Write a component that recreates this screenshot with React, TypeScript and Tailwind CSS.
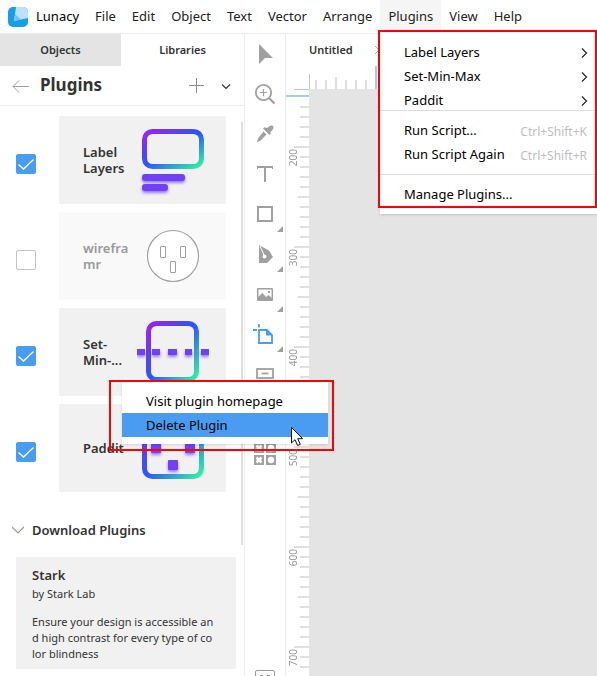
import type { ReactNode } from "react";

const MENU = ["File", "Edit", "Object", "Text", "Vector", "Arrange", "Plugins", "View", "Help"];

function Logo() {
  return (
    <svg width="20" height="20" viewBox="0 0 20 20" aria-hidden="true">
      <defs>
        <clipPath id="logo">
          <rect width="20" height="20" rx="5" />
        </clipPath>
      </defs>
      <g clipPath="url(#logo)">
        <rect width="20" height="20" fill="#179fe5" />
        <path d="M8 0h12v11L6 14Z" fill="#bce2f7" />
        <path d="M7 7 13 12.500 6 14Z" fill="#72c4f0" />
      </g>
    </svg>
  );
}

function BrandGradient({ id }: { id: string }) {
  return (
    <defs>
      <linearGradient id={id} x1="0" y1="0" x2="1" y2="1">
        <stop offset="0" stopColor="#a020f5" />
        <stop offset="0.5" stopColor="#2b55ff" />
        <stop offset="1" stopColor="#30f5a0" />
      </linearGradient>
      <filter id={id + "-shadow"} x="-50%" y="-50%" width="200%" height="250%">
        <feDropShadow dx="0" dy="2" stdDeviation="1.500" floodColor="#6f42f7" floodOpacity="0.7" />
      </filter>
    </defs>
  );
}

function LabelArt() {
  return (
    <svg width="72" height="72" viewBox="0 0 72 72" aria-hidden="true">
      <BrandGradient id="art-label" />
      <rect x="7.500" y="7.500" width="57" height="35" rx="8" fill="none" stroke="url(#art-label)" strokeWidth="5" />
      <g fill="#7040f5" filter="url(#art-label-shadow)">
        <rect x="5" y="50" width="43" height="7" rx="3" />
        <rect x="5" y="60" width="26" height="7" rx="3" />
      </g>
    </svg>
  );
}

function SocketArt() {
  return (
    <svg width="72" height="72" viewBox="0 0 72 72" fill="none" stroke="#a0a0a0" aria-hidden="true">
      <circle cx="36" cy="36" r="25.500" fill="#fff" strokeWidth="1.200" />
      <rect x="23.500" y="26.500" width="5" height="11" rx="0.500" />
      <rect x="43.500" y="26.500" width="5" height="11" rx="0.500" />
      <rect x="33.500" y="41.500" width="5" height="11" rx="0.500" />
    </svg>
  );
}

function MinMaxArt() {
  return (
    <svg width="72" height="72" viewBox="0 0 72 72" aria-hidden="true">
      <BrandGradient id="art-minmax" />
      <rect x="11.500" y="7.500" width="48" height="56" rx="8" fill="none" stroke="url(#art-minmax)" strokeWidth="5" />
      <g fill="#7040f5" filter="url(#art-minmax-shadow)">
        <rect x="0" y="33" width="8" height="6" />
        <rect x="15" y="33" width="8" height="6" />
        <rect x="31" y="33" width="9" height="6" />
        <rect x="48" y="33" width="7" height="6" />
        <rect x="64" y="33" width="8" height="6" />
      </g>
    </svg>
  );
}

function PadditArt() {
  return (
    <svg width="72" height="72" viewBox="0 0 72 72" aria-hidden="true">
      <BrandGradient id="art-paddit" />
      <rect x="7.500" y="7.500" width="57" height="57" rx="8" fill="none" stroke="url(#art-paddit)" strokeWidth="5" />
      <g fill="#7040f5" filter="url(#art-paddit-shadow)">
        <rect x="31" y="15" width="10" height="10" rx="1" />
        <rect x="14" y="31" width="10" height="10" rx="1" />
        <rect x="48" y="31" width="10" height="10" rx="1" />
        <rect x="31" y="48" width="10" height="10" rx="1" />
      </g>
    </svg>
  );
}

type Plugin = { id: string; name: string; on: boolean; art: ReactNode };

const PLUGINS: Plugin[] = [
  { id: "label-layers", name: "Label\nLayers", on: true, art: <LabelArt /> },
  { id: "wireframr", name: "wirefra\nmr", on: false, art: <SocketArt /> },
  { id: "set-min-max", name: "Set-\nMin-...", on: true, art: <MinMaxArt /> },
  { id: "paddit", name: "Paddit", on: true, art: <PadditArt /> },
];

function PluginRow({ plugin }: { plugin: Plugin }) {
  return (
    <li className="flex items-center">
      <span className="grid w-[59px] shrink-0 grid-cols-1 pl-4 pt-2">
        <input
          id={plugin.id}
          type="checkbox"
          defaultChecked={plugin.on}
          className="peer col-start-1 row-start-1 size-5 appearance-none rounded-xs border border-[#c4c4c4] bg-white checked:border-[#4a9cf2] checked:bg-[#4a9cf2]"
        />
        <svg
          className="pointer-events-none invisible col-start-1 row-start-1 peer-checked:visible"
          width="20"
          height="20"
          viewBox="0 0 20 20"
          fill="none"
          stroke="#fff"
          strokeWidth="1.300"
          aria-hidden="true"
        >
          <path d="m2.500 10.500 5 4.500 10-9.500" />
        </svg>
      </span>
      <label
        htmlFor={plugin.id}
        className={`flex h-[88px] w-[167px] items-center rounded-xs pl-6 text-[13px] leading-4 font-semibold whitespace-pre-line ${
          plugin.on ? "bg-[#f1f1f1] text-[#333]" : "bg-[#f9f9f9] text-[#999]"
        }`}
      >
        <span className="w-[54px] shrink-0">{plugin.name}</span>
        {plugin.art}
      </label>
    </li>
  );
}

function Sidebar() {
  return (
    <aside className="flex w-[245px] shrink-0 flex-col border-r border-[#ececec]">
      <div className="flex h-8 shrink-0 text-[11px] font-semibold text-[#333]">
        <button className="w-[121px] bg-[#e4e4e4] pt-px">Objects</button>
        <button className="flex-1 pt-px">Libraries</button>
      </div>
      <div className="flex h-10 shrink-0 items-center border-b border-[#ececec] pr-2 pl-3">
        <button aria-label="Back" className="w-7">
          <svg width="18" height="14" viewBox="0 0 18 14" fill="none" stroke="#a0a0a0" aria-hidden="true">
            <path d="M17 7.500H1M7 1.500l-6 6 6 6" />
          </svg>
        </button>
        <h1 className="flex-1 pb-[2px] text-[17px] leading-6 font-bold text-[#333]">Plugins</h1>
        <button aria-label="Add plugin" className="mr-3">
          <svg width="16" height="16" viewBox="0 0 16 16" stroke="#8a8a8a" aria-hidden="true">
            <path d="M8.500 0v15M1 7.500h15" />
          </svg>
        </button>
        <button aria-label="More" className="px-1">
          <svg width="12" height="12" viewBox="0 0 12 12" fill="none" stroke="#333" strokeWidth="1.200" aria-hidden="true">
            <path d="m2 4.500 4 4 4-4" />
          </svg>
        </button>
      </div>
      <div className="flex min-h-0 flex-1 justify-between">
        <div>
          <ul className="flex flex-col gap-2 pt-[10px]">
            {PLUGINS.map((p) => (
              <PluginRow key={p.id} plugin={p} />
            ))}
          </ul>
          <button className="mt-[27px] flex h-6 items-center pl-3 text-[13px] font-semibold text-[#333]">
            <svg className="mr-2" width="12" height="12" viewBox="0 0 12 12" fill="none" stroke="#999" strokeWidth="1.200" aria-hidden="true">
              <path d="m0 2 6 6 6-6" />
            </svg>
            Download Plugins
          </button>
          <article className="mt-[14px] ml-4 h-28 w-[220px] rounded-xs bg-[#f1f1f1] px-4 py-2 text-[11px] leading-4 text-[#333]">
            <h2 className="text-[13px] leading-5 font-semibold">Stark</h2>
            <p className="leading-[18px]">by Stark Lab</p>
            <p className="mt-[11px] whitespace-pre">{"Ensure your design is accessible an\nd high contrast for every type of co\nlor blindness"}</p>
          </article>
        </div>
        <div className="mt-4 mr-px h-[423px] w-[2px] bg-[#dedede]" />
      </div>
    </aside>
  );
}

const TOOLS: { name: string; more?: boolean; icon: ReactNode }[] = [
  { name: "Select", icon: <path d="M7 4v20l6-6h8Z" fill="#a0a0a0" /> },
  {
    name: "Zoom",
    icon: (
      <g fill="none" stroke="#a0a0a0">
        <circle cx="11.500" cy="12.500" r="7.700" strokeWidth="1.800" />
        <path d="M11.500 9v7M8 12.500h7" strokeWidth="1.200" />
        <path d="m17 18 5.500 5.500" strokeWidth="2.200" />
      </g>
    ),
  },
  {
    name: "Pick colour",
    icon: (
      <g fill="#a0a0a0">
        <path d="M16 7.500c2-2 4-2.500 5-1.500s.5 3-1.500 5l-1.500 1.500 1 1-1.500 1.500-6.500-6.500 1.500-1.500 1 1Z" />
        <path d="m11.500 11.500 3 3-6.500 6.500-3 1 1-3.500Z" />
      </g>
    ),
  },
  { name: "Text", icon: <path d="M5 9V6h16v3h-1V8h-6v14h-2V8H6v1Z" fill="#a0a0a0" /> },
  { name: "Rectangle", more: true, icon: <rect x="6" y="7" width="14" height="14" fill="none" stroke="#a0a0a0" strokeWidth="2" /> },
  {
    name: "Pen",
    more: true,
    icon: (
      <g>
        <path d="m7 5 10 5.500 4 6.500-6 6H7Z" fill="#a0a0a0" />
        <path d="m8 6 4 9" stroke="#fff" />
        <circle cx="12.500" cy="16.500" r="1.900" fill="#fff" />
      </g>
    ),
  },
  {
    name: "Image",
    more: true,
    icon: (
      <g>
        <rect x="5.700" y="8.700" width="14.600" height="11.600" rx="0.500" fill="none" stroke="#a0a0a0" strokeWidth="1.500" />
        <path d="M6 19v-2l4.500-4 3.500 4 2.500-2 4 3.500v1.500H6Z" fill="#a0a0a0" />
        <rect x="16" y="11" width="2" height="2" fill="#a0a0a0" />
      </g>
    ),
  },
  {
    name: "Artboard",
    more: true,
    icon: (
      <g fill="none" stroke="#4a9cf2" strokeWidth="1.800">
        <path d="M7 4v3.500M1 10h4" />
        <path d="M7 10h8l5 5v8H7Z" />
        <path d="M14 9.500v6h7Z" fill="#4a9cf2" stroke="none" />
      </g>
    ),
  },
  {
    name: "Button",
    icon: (
      <g fill="none" stroke="#a0a0a0" strokeWidth="1.800">
        <rect x="5" y="9" width="16" height="9" />
        <path d="M9.500 13.500h7" />
      </g>
    ),
  },
  { name: "Hotspot", icon: null },
  {
    name: "Components",
    icon: (
      <g transform="translate(0 -1)">
        <path d="M2 4h10v10H2ZM14 4h10v10H14ZM2 16h10v10H2ZM14 16h10v10H14Z" fill="#a0a0a0" />
        <path d="m4.500 6.500 5 5M9.500 6.500l-5 5M4.500 18.500l5 5M9.500 18.500l-5 5" stroke="#fff" strokeWidth="2.500" />
        <circle cx="19" cy="9" r="3.200" fill="#fff" />
        <circle cx="19" cy="21" r="3.200" fill="#fff" />
      </g>
    ),
  },
];

function Toolbar() {
  return (
    <nav aria-label="Tools" className="flex w-[41px] shrink-0 flex-col border-r border-[#ececec]">
      {TOOLS.map((t) => (
        <button key={t.name} aria-label={t.name} className="flex h-10 w-10 shrink-0 items-end">
          <svg width="40" height="40" viewBox="0 0 40 40" aria-hidden="true">
            <g transform="translate(7 6)">{t.icon}</g>
            {t.more && <path d="M38 32v6h-6Z" fill="#a0a0a0" />}
          </svg>
        </button>
      ))}
      <button aria-label="Shortcuts" className="mt-auto -mb-2 flex shrink-0 justify-center">
        <svg width="20" height="14" viewBox="0 0 20 14" fill="none" stroke="#999" aria-hidden="true">
          <rect x="0.500" y="0.500" width="19" height="13" rx="1.500" />
          <path d="M5 5.500h3M12 5.500h3" />
        </svg>
      </button>
    </nav>
  );
}

function VerticalRuler() {
  const rows = Array.from({ length: 59 }, (_, i) => i + 11);
  return (
    <div className="flex w-[23px] shrink-0 flex-col">
      <div className="ml-2 h-px shrink-0 bg-[#c4c4c4]" />
      <div className="mt-[5px] mb-[9px] h-[2px] shrink-0 bg-[#a3cbf8]" />
      {rows.map((r) => {
        const major = r % 10 === 5;
        const mid = r % 10 === 0;
        return (
          <div key={r} className="flex h-[10px] shrink-0 items-start justify-end">
            {major && (
              <span className="mt-[3px] mr-auto ml-[2px] h-[18px] w-[10px] text-[10px] leading-[10px] text-[#999]">
                <span className="block rotate-180 [writing-mode:vertical-rl]">{(r - 15) * 10 + 200}</span>
              </span>
            )}
            <div className={`h-[2px] bg-[#dedede] ${major ? "-ml-1 w-[15px]" : mid ? "w-[11px]" : "w-[9px]"}`} />
          </div>
        );
      })}
    </div>
  );
}

function HorizontalRuler() {
  return (
    <div className="ml-[23px] flex h-[23px] items-end overflow-hidden">
      <div className="h-[15px] w-px shrink-0 bg-[#c4c4c4]" />
      {["h-[9px]", "h-[9px]", "h-3", "h-[9px]", "h-[9px]", "h-[9px]"].map((h, i) => (
        <div key={i} className={`w-[2px] shrink-0 bg-[#dedede] ${i ? "ml-2" : "ml-[5px]"} ${h}`} />
      ))}
      <div className="ml-2 h-6 w-[2px] shrink-0 bg-[#a3cbf8]" />
    </div>
  );
}

function Workspace() {
  return (
    <main className="flex min-w-0 flex-1 flex-col">
      <div className="flex h-8 shrink-0 items-center pl-[23px] text-[11px] font-semibold text-[#333]">
        <span className="w-[65px]">Untitled</span>
        <button aria-label="Close tab">
          <svg width="10" height="10" viewBox="0 0 10 10" stroke="#aaa" aria-hidden="true">
            <path d="m1 1 8 8M9 1 1 9" />
          </svg>
        </button>
      </div>
      <HorizontalRuler />
      <div className="flex min-h-0 flex-1">
        <VerticalRuler />
        <div className="flex-1 bg-[#e4e4e4]" />
      </div>
    </main>
  );
}

function SubmenuItem({ children }: { children: string }) {
  return (
    <button role="menuitem" className="flex h-6 w-full items-center justify-between pr-[9px] pl-6">
      {children}
      <svg width="8" height="12" viewBox="0 0 8 12" fill="none" stroke="#222" strokeWidth="1.200" aria-hidden="true">
        <path d="m2 1.500 4.500 4.500L2 10.500" />
      </svg>
    </button>
  );
}

function CommandItem({ children, keys }: { children: string; keys?: string }) {
  return (
    <button role="menuitem" className="flex h-6 w-full items-center justify-between pr-[10px] pl-6">
      {children}
      {keys && <kbd className="pt-px font-['Noto_Sans',sans-serif] text-[12px] text-[#bdbdbd]">{keys}</kbd>}
    </button>
  );
}

export default function App() {
  return (
    <div className="relative flex h-screen flex-col overflow-hidden bg-white font-['Noto_Sans','Open_Sans',sans-serif] text-[13px] text-[#222]">
      <header className="flex h-[34px] shrink-0 items-start border-b border-[#ececec] pl-2">
        <div className="flex h-[33px] items-center gap-2 pt-px pr-2 text-black">
          <Logo />
          <span>Lunacy</span>
        </div>
        {MENU.map((m) => (
          <button key={m} className={`px-2 ${m === "Plugins" ? "h-[30px] bg-[#f5f5f5] pt-1" : "h-[33px] pt-px"}`}>
            {m}
          </button>
        ))}
      </header>
      <div className="flex min-h-0 flex-1">
        <Sidebar />
        <Toolbar />
        <Workspace />
      </div>

      <div role="menu" aria-label="Plugins" className="absolute top-[31px] right-0 w-[217px] bg-white pt-[10px] pb-[7px] text-black shadow-sm">
        <SubmenuItem>Label Layers</SubmenuItem>
        <SubmenuItem>Set-Min-Max</SubmenuItem>
        <SubmenuItem>Paddit</SubmenuItem>
        <hr className="-mt-[3px] mb-2 border-[#dedede]" />
        <CommandItem keys="Ctrl+Shift+K">Run Script...</CommandItem>
        <CommandItem keys="Ctrl+Shift+R">Run Script Again</CommandItem>
        <hr className="mt-[7px] mb-2 border-[#dedede]" />
        <CommandItem>Manage Plugins...</CommandItem>
      </div>
      <div className="pointer-events-none absolute top-[30px] right-0 h-[178px] w-[219px] border-2 border-[#f00]" />

      <div role="menu" aria-label="Plugin actions" className="absolute top-[382px] left-[122px] w-[206px] bg-white py-[7px] text-black shadow-sm">
        <button role="menuitem" className="flex h-6 w-full items-center pt-[2px] pl-6">Visit plugin homepage</button>
        <button role="menuitem" className="flex h-6 w-full items-center bg-[#4a9cf2] pt-[2px] pl-6">Delete Plugin</button>
      </div>
      <div className="pointer-events-none absolute top-[380px] left-[109px] h-[71px] w-[225px] border-2 border-[#f00]" />
      <svg className="pointer-events-none absolute top-[426px] left-[291px]" width="13" height="21" viewBox="0 0 13 21" aria-hidden="true">
        <path d="M.5 1.500v15.500l3.500-3.300 2.600 5.800 2.700-1.200-2.600-5.600h5Z" fill="#fff" stroke="#111" />
      </svg>
    </div>
  );
}
